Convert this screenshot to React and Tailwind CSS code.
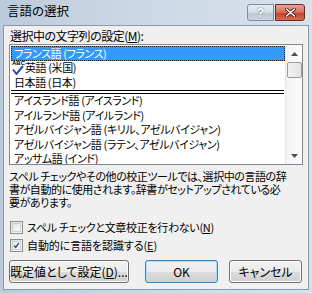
import React from 'react';

const jp = "font-['Noto_Sans_CJK_JP',sans-serif] [font-feature-settings:'palt']";

const rows = [
  'アイスランド語 (アイスランド)',
  'アイルランド語 (アイルランド)',
  'アゼルバイジャン語 (キリル、アゼルバイジャン)',
  'アゼルバイジャン語 (ラテン、アゼルバイジャン)',
  'アッサム語 (インド)',
];

const Check = ({ checked, children, className }) => (
  <div className="flex h-[14px] shrink-0 items-center">
    <span className="ml-[6px] flex h-[13px] w-[13px] shrink-0 items-center justify-center border border-[#8f8f8f] bg-gradient-to-br from-[#dcdcdc] to-[#f8f8f8]">
      <span className="flex h-[9px] w-[9px] items-center justify-center border border-[#d0d0d0] bg-gradient-to-br from-[#e4e4e4] to-[#fcfcfc]">
        {checked && (
          <svg width="9" height="9" viewBox="0 0 9 9">
            <path d="M1.5 4.5 L3.5 7 L7.5 1.5" fill="none" stroke="#21418c" strokeWidth="1.6" />
          </svg>
        )}
      </span>
    </span>
    <span className={`ml-[4px] whitespace-nowrap text-[11px] leading-none text-black ${className}`}>{children}</span>
  </div>
);

const Btn = ({ children, def, className }) => (
  <div
    className={`flex h-[23px] items-center justify-center rounded-[3px] border ${
      def ? 'border-[#3c7fb1] shadow-[inset_0_0_0_1px_#a4e3fb]' : 'border-[#707070] shadow-[inset_0_0_0_1px_#fbfbfb]'
    } bg-[linear-gradient(#f2f2f2_0%,#ebebeb_50%,#dddddd_51%,#cfcfcf_100%)] text-[12px] text-black ${className}`}
  >
    {children}
  </div>
);

export default function App() {
  return (
    <div className={`flex h-[293px] w-[312px] flex-col overflow-hidden bg-gradient-to-r from-[#bccbdc] via-[#cdd9e6] to-[#d8e2ec] ${jp}`}>
      {/* title bar */}
      <div className="flex h-[25px] shrink-0 items-start">
        <span className="ml-[7px] mt-[5px] text-[12.5px] leading-none text-black">言語の選択</span>
        <div className="ml-auto mr-[7px] mt-[4px] flex">
          <div className="flex h-[17px] w-[27px] items-center justify-center rounded-l-[3px] border border-[#7d8b9c] bg-[linear-gradient(#e9eef4_0%,#d3dce7_50%,#b9c6d4_51%,#cbd6e2_100%)]">
            <span className="font-['Liberation_Sans',sans-serif] text-[12px] font-bold leading-none text-white [text-shadow:0_0_2px_#4a5a6e]">?</span>
          </div>
          <div className="ml-[1px] flex h-[17px] w-[30px] items-center justify-center rounded-r-[3px] border border-[#6c2a22] bg-[linear-gradient(#e8a393_0%,#d66b55_50%,#c4412a_51%,#d66c4f_100%)]">
            <svg width="11" height="9" viewBox="0 0 11 9">
              <path d="M1.5 1 L9.5 8 M9.5 1 L1.5 8" stroke="#3b1410" strokeWidth="3" strokeLinecap="round" />
              <path d="M1.5 1 L9.5 8 M9.5 1 L1.5 8" stroke="#fff" strokeWidth="1.6" strokeLinecap="round" />
            </svg>
          </div>
        </div>
      </div>

      {/* client */}
      <div className="mx-[3px] mb-[3px] flex min-h-0 flex-1 flex-col border border-[#8a9bb0] bg-[#f0f0f0]">
        <div className="ml-[6px] mt-[4px] h-[14px] shrink-0 text-[12px] leading-none tracking-[-0.5px] text-black">
          選択中の文字列の設定(<span className="underline">M</span>):
        </div>

        <div className="mx-[5px] flex h-[121px] shrink-0 border border-[#828790] bg-white">
          <div className="flex min-w-0 flex-1 flex-col overflow-hidden pl-[1px] pt-[1px] text-[11px] leading-none tracking-[-0.4px] text-black">
            <div className="flex h-[14.5px] shrink-0 items-center border border-dotted border-[#1a1a1a] bg-[#3399ff] pl-[2px] text-white">
              フランス語 (フランス)
            </div>
            <div className="flex h-[14.5px] shrink-0 items-center">
              <span className="relative h-[14px] w-[14px] shrink-0">
                <span className="absolute left-[1px] top-[-1px] font-['Liberation_Sans',sans-serif] text-[6px] font-bold leading-none tracking-normal text-black">ABC</span>
                <svg className="absolute left-[1px] top-[3px]" width="12" height="11" viewBox="0 0 12 11">
                  <path d="M1 5.5 L4.5 10 L11 2" fill="none" stroke="#2b4fa8" strokeWidth="2" />
                </svg>
              </span>
              英語 (米国)
            </div>
            <div className="flex h-[14.5px] shrink-0 items-center pl-[3px]">日本語 (日本)</div>
            <div className="mr-[1px] h-[4px] shrink-0 border-y border-black" />
            {rows.map((r) => (
              <div key={r} className="flex h-[14.5px] shrink-0 items-center whitespace-nowrap pl-[3px]">
                {r}
              </div>
            ))}
          </div>
          {/* scrollbar */}
          <div className="flex w-[17px] shrink-0 flex-col items-center border-l border-[#e8e8e8] bg-[linear-gradient(90deg,#f3f3f3,#fdfdfd)]">
            <div className="flex h-[17px] items-center justify-center">
              <svg width="7" height="4" viewBox="0 0 7 4"><path d="M0 4 L3.5 0 L7 4 Z" fill="#4d4d4d" /></svg>
            </div>
            <div className="h-[16px] w-[15px] rounded-[2px] border border-[#9a9a9a] bg-[linear-gradient(90deg,#f2f2f2,#e2e2e2)]" />
            <div className="mt-auto flex h-[17px] items-center justify-center">
              <svg width="7" height="4" viewBox="0 0 7 4"><path d="M0 0 L7 0 L3.5 4 Z" fill="#4d4d4d" /></svg>
            </div>
          </div>
        </div>

        <p className="ml-[5px] mt-[5px] shrink-0 whitespace-nowrap text-[11px] leading-[13px] tracking-[-0.45px] text-black">
          スペル チェックやその他の校正ツールでは、選択中の言語の辞
          <br />
          書が自動的に使用されます。辞書がセットアップされている必
          <br />
          要があります。
        </p>

        <div className="mt-[11px]">
          <Check className="tracking-[-0.3px]">スペル チェックと文章校正を行わない(<span className="underline">N</span>)</Check>
        </div>
        <div className="mt-[4px]">
          <Check checked className="tracking-[-0.1px]">自動的に言語を認識する(<span className="underline">E</span>)</Check>
        </div>

        <div className="mt-[8px] flex shrink-0 px-[5px]">
          <Btn className="w-[120px]">既定値として設定(<span className="underline">D</span>)...</Btn>
          <Btn def className="ml-[16px] w-[73px]">OK</Btn>
          <Btn className="ml-[11px] w-[73px]">キャンセル</Btn>
        </div>
      </div>
    </div>
  );
}
